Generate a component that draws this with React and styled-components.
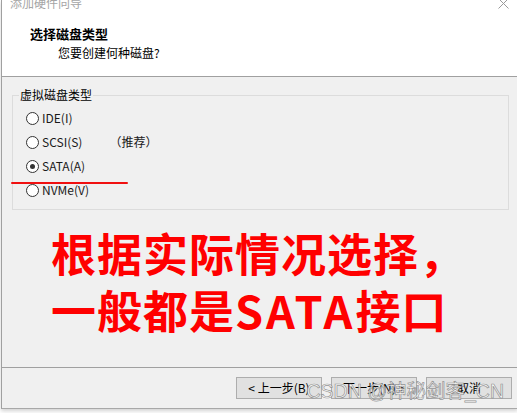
import React from 'react';
import styled, { createGlobalStyle } from 'styled-components';

const GlobalStyle = createGlobalStyle`
    html, body {
        margin: 0;
        padding: 0;
        background: #ffffff;
    }
    body {
        font-family: "Noto Sans CJK SC", "Noto Sans", sans-serif;
        width: 517px;
        height: 413px;
        overflow: hidden;
    }
`;

const options = [
    { label: 'IDE(I)' },
    { label: 'SCSI(S)', note: '（推荐）' },
    { label: 'SATA(A)', checked: true },
    { label: 'NVMe(V)' },
];

const buttons = ['< 上一步(B)', '下一步(N) >', '取消'];

const App = () => {
    return (
        <>
            <GlobalStyle />
            <Window>
                <Header>
                    <TitleBar>
                        <span className="title">添加硬件向导</span>
                        <CloseIcon width="11" height="11" viewBox="0 0 11 11">
                            <path d="M0.5 0.5 L10.5 10.5 M10.5 0.5 L0.5 10.5" stroke="#9a9a9a" strokeWidth="1" />
                        </CloseIcon>
                    </TitleBar>
                    <h1>选择磁盘类型</h1>
                    <p>您要创建何种磁盘?</p>
                </Header>

                <Body>
                    <GroupBox>
                        <legend>虚拟磁盘类型</legend>
                        {options.map(({ label, note, checked }) => (
                            <RadioRow key={label}>
                                <Radio $checked={checked} />
                                <span>{label}</span>
                                {note && <Note>{note}</Note>}
                            </RadioRow>
                        ))}
                        <Underline />
                    </GroupBox>

                    <Callout>
                        <div>根据实际情况选择，</div>
                        <div>一般都是<Latin>SATA</Latin>接口</div>
                    </Callout>
                </Body>

                <Footer>
                    {buttons.map((text) => (
                        <Button key={text}>{text}</Button>
                    ))}
                </Footer>

                <Watermark>CSDN @神秘剑客_CN</Watermark>
            </Window>
        </>
    );
};

export default App;

const Window = styled.div`
    position: relative;
    width: 516px;
    height: 408px;
    margin-left: 1px;
    border-left: 1px solid #a0a0a0;
    border-bottom: 1px solid #a8a8a8;
    box-shadow: 0 2px 4px rgba(0, 0, 0, 0.18);
    background: #f0f0f0;
    display: flex;
    flex-direction: column;
`;

const Header = styled.div`
    height: 76px;
    background: #ffffff;
    border-bottom: 1px solid #a0a0a0;

    h1 {
        margin: 16px 0 0 28px;
        font-size: 13px;
        line-height: 16px;
        font-weight: 700;
        color: #000000;
    }

    p {
        margin: 3px 0 0 56px;
        font-size: 12px;
        line-height: 16px;
        color: #000000;
    }
`;

const TitleBar = styled.div`
    height: 10px;
    display: flex;
    justify-content: space-between;
    align-items: flex-start;
    padding: 0 8px 0 8px;
    overflow: hidden;

    .title {
        margin-top: -5px;
        font-size: 12px;
        line-height: 16px;
        color: #a5a5a5;
    }
`;

const CloseIcon = styled.svg`
    margin-top: -2px;
    margin-right: 1px;
`;

const Body = styled.div`
    height: 290px;
    border-bottom: 1px solid #a0a0a0;
    display: flex;
    flex-direction: column;
`;

const GroupBox = styled.fieldset`
    position: relative;
    margin: 11px 9px 0 10px;
    padding: 4px 0 7px 0;
    border: 1px solid #dcdcdc;
    min-width: 0;

    legend {
        margin-left: 6px;
        padding: 0 1px;
        font-size: 12px;
        line-height: 14px;
        color: #000000;
    }
`;

const RadioRow = styled.div`
    height: 24px;
    display: flex;
    align-items: center;
    padding-left: 13px;
    font-size: 12px;
    color: #1a1a1a;

    span {
        line-height: 16px;
    }
`;

const Radio = styled.div`
    width: 11px;
    height: 11px;
    border: 1px solid #333333;
    border-radius: 50%;
    background: #ffffff;
    margin-right: 3px;
    display: flex;
    align-items: center;
    justify-content: center;

    &::after {
        content: '';
        display: ${(p) => (p.$checked ? 'block' : 'none')};
        width: 5px;
        height: 5px;
        border-radius: 50%;
        background: #333333;
    }
`;

const Note = styled.span`
    margin-left: 27px;
`;

const Underline = styled.div`
    position: absolute;
    left: -2px;
    top: 80px;
    width: 117px;
    height: 2px;
    border-radius: 1px;
    background: #f01010;
`;

const Callout = styled.div`
    margin: 14px 0 0 49px;
    font-size: 45px;
    line-height: 57px;
    font-weight: 700;
    letter-spacing: 1px;
    color: #ff0000;
    white-space: nowrap;
`;

const Latin = styled.span`
    letter-spacing: 3px;
`;

const Footer = styled.div`
    flex: 1;
    display: flex;
    justify-content: flex-end;
    align-items: flex-start;
    gap: 9px;
    padding: 9px 6px 0 0;
`;

const Button = styled.div`
    width: 84px;
    height: 20px;
    border: 1px solid #adadad;
    background: #e1e1e1;
    font-size: 12px;
    line-height: 20px;
    text-align: center;
    color: #000000;
`;

const Watermark = styled.div`
    position: absolute;
    right: 14px;
    bottom: 6px;
    font-family: "Liberation Sans", "Noto Sans CJK SC", sans-serif;
    font-size: 19.5px;
    line-height: 22px;
    color: rgba(255, 255, 255, 0.85);
    -webkit-text-stroke: 0.7px rgba(120, 120, 120, 0.8);
    white-space: nowrap;
`;
